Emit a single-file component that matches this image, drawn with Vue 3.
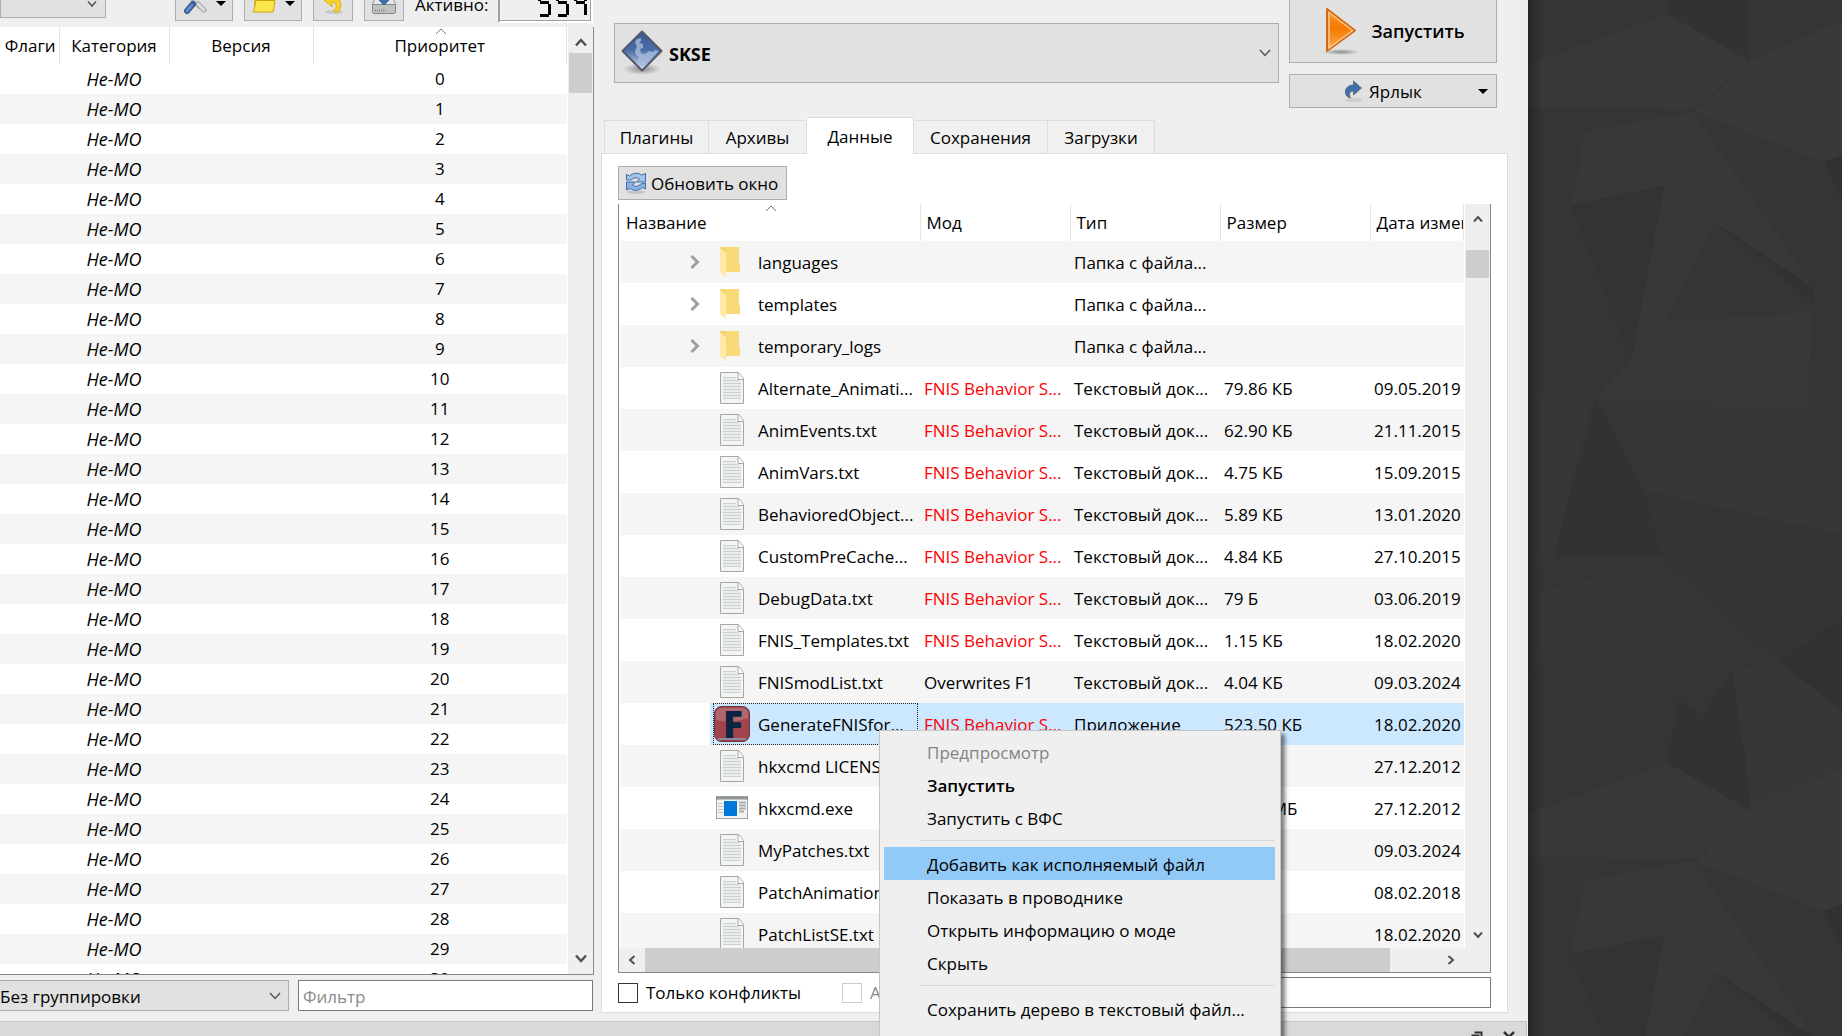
<script setup>
import { ref } from 'vue'

const mods = Array.from({ length: 31 }, (_, i) => i)

const tabs = ['Плагины', 'Архивы', 'Данные', 'Сохранения', 'Загрузки']
const activeTab = ref('Данные')

const fnis = 'FNIS Behavior S...'
const txt = 'Текстовый док...'
const folder = 'Папка с файла...'

const files = [
  { icon: 'folder', name: 'languages', mod: '', type: folder, size: '', date: '' },
  { icon: 'folder', name: 'templates', mod: '', type: folder, size: '', date: '' },
  { icon: 'folder', name: 'temporary_logs', mod: '', type: folder, size: '', date: '' },
  { icon: 'text', name: 'Alternate_Animati...', mod: fnis, type: txt, size: '79.86 КБ', date: '09.05.2019' },
  { icon: 'text', name: 'AnimEvents.txt', mod: fnis, type: txt, size: '62.90 КБ', date: '21.11.2015' },
  { icon: 'text', name: 'AnimVars.txt', mod: fnis, type: txt, size: '4.75 КБ', date: '15.09.2015' },
  { icon: 'text', name: 'BehavioredObject...', mod: fnis, type: txt, size: '5.89 КБ', date: '13.01.2020' },
  { icon: 'text', name: 'CustomPreCache...', mod: fnis, type: txt, size: '4.84 КБ', date: '27.10.2015' },
  { icon: 'text', name: 'DebugData.txt', mod: fnis, type: txt, size: '79 Б', date: '03.06.2019 2' },
  { icon: 'text', name: 'FNIS_Templates.txt', mod: fnis, type: txt, size: '1.15 КБ', date: '18.02.2020 2' },
  { icon: 'text', name: 'FNISmodList.txt', mod: 'Overwrites F1', type: txt, size: '4.04 КБ', date: '09.03.2024 8' },
  { icon: 'fnis', name: 'GenerateFNISfor...', mod: fnis, type: 'Приложение', size: '523.50 КБ', date: '18.02.2020 2', selected: true },
  { icon: 'text', name: 'hkxcmd LICENS...', mod: '', type: '', size: '', date: '27.12.2012 2' },
  { icon: 'exe', name: 'hkxcmd.exe', mod: '', type: '', size: '10.34 МБ', date: '27.12.2012 2' },
  { icon: 'text', name: 'MyPatches.txt', mod: '', type: '', size: '', date: '09.03.2024 2' },
  { icon: 'text', name: 'PatchAnimation...', mod: '', type: '', size: '', date: '08.02.2018' },
  { icon: 'text', name: 'PatchListSE.txt', mod: '', type: '', size: '', date: '18.02.2020 2' },
]

const menuGroups = [
  [
    { label: 'Предпросмотр', disabled: true },
    { label: 'Запустить', bold: true },
    { label: 'Запустить с ВФС' },
  ],
  [
    { label: 'Добавить как исполняемый файл', hover: true },
    { label: 'Показать в проводнике' },
    { label: 'Открыть информацию о моде' },
    { label: 'Скрыть' },
  ],
  [
    { label: 'Сохранить дерево в текстовый файл...' },
    { label: 'Обновить' },
  ],
]

// Lit segments of the active-mods counter
const digits = [
  ['a', 'f', 'g', 'c', 'd'],
  ['a', 'f', 'g', 'c', 'd'],
  ['f', 'b', 'g', 'c'],
]
</script>

<template>
  <div class="screen">
    <div class="window">
      <div class="main">
        <section class="left">
          <div class="toolbar">
            <select class="profile" aria-label="Профиль"><option></option></select>
            <svg class="profile-arrow" width="10" height="8" viewBox="0 0 10 8"><path d="M1 1.500L5 6L9 1.500" fill="none" stroke="#555" stroke-width="1.500" /></svg>
            <div class="tools">
              <button class="tool wide" aria-label="Инструменты">
                <svg width="24" height="24" viewBox="0 0 24 24">
                  <path d="M5 4l12 13" stroke="#b9bcc0" stroke-width="4" />
                  <path d="M15 13l6 6" stroke="#9fa4aa" stroke-width="5" stroke-linecap="round" />
                  <path d="M15 13l6 6" stroke="#dcdfe2" stroke-width="3" stroke-linecap="round" />
                  <path d="M19 3L10 13" stroke="#cdd1d6" stroke-width="3" />
                  <path d="M10 13l-6 7" stroke="#35598f" stroke-width="6" stroke-linecap="round" />
                  <path d="M9 14l-5 6" stroke="#5f8bca" stroke-width="3" stroke-linecap="round" />
                </svg>
                <i class="drop"></i>
              </button>
              <button class="tool wide" aria-label="Открыть папку">
                <svg width="24" height="24" viewBox="0 0 24 24">
                  <path d="M3 20V5l2-2h6l2 3h8v13z" fill="#e4bd17" stroke="#c79e0c" />
                  <path d="M1.500 21L4 9.500h19L21 21z" fill="#fbe64b" stroke="#c9a30e" />
                </svg>
                <i class="drop"></i>
              </button>
              <button class="tool" aria-label="Восстановить">
                <svg width="24" height="24" viewBox="0 0 24 24">
                  <ellipse cx="13" cy="21" rx="9" ry="2" fill="#c9c9c9" />
                  <path d="M3 9l8-8v5c8 0 11 7 7 14-2 2-4 1-6 0 5-2 4-9-1-9v5z" fill="#f5d327" stroke="#dcae16" />
                </svg>
              </button>
              <button class="tool" aria-label="Резервная копия">
                <svg width="26" height="24" viewBox="0 0 26 24">
                  <path d="M5 5h16l4 9H1z" fill="#e4e5e6" stroke="#9b9da0" />
                  <path d="M1.500 13.500h23V21q0 1.500-1.500 1.500H3Q1.500 22.500 1.500 21z" fill="#bfc1c3" stroke="#85878a" />
                  <path d="M4 19.500h11" stroke="#8a8c8e" stroke-width="2" stroke-dasharray="1 1" />
                  <path d="M10 0h6v6h5l-8 8-8-8h5z" fill="#3d70b5" stroke="#2d5689" />
                </svg>
              </button>
              <span class="active-label">Активно:</span>
              <div class="lcd" role="img" aria-label="554">
                <div v-for="(d, i) in digits" :key="i" class="digit">
                  <i v-for="s in d" :key="s" :class="['seg', s]"></i>
                </div>
              </div>
            </div>
          </div>

          <div class="mod-list">
            <div class="mod-view">
              <table class="mods">
                <colgroup><col class="m1" /><col class="m2" /><col class="m3" /><col /></colgroup>
                <thead>
                  <tr>
                    <th>Флаги</th>
                    <th>Категория</th>
                    <th>Версия</th>
                    <th>
                      <svg class="sort" width="12" height="7" viewBox="0 0 12 7"><path d="M1 6L6 1L11 6" fill="none" stroke="#777" /></svg>
                      Приоритет
                    </th>
                  </tr>
                </thead>
                <tbody>
                  <tr v-for="n in mods" :key="n"><td></td><td class="cat">Не-МО</td><td></td><td>{{ n }}</td></tr>
                </tbody>
              </table>
            </div>
            <div class="vbar">
              <svg width="12" height="9" viewBox="0 0 12 9"><path d="M1 7.500L6 2L11 7.500" fill="none" stroke="#505050" stroke-width="2.500" /></svg>
              <div class="thumb mods-thumb"></div>
              <svg class="down" width="12" height="9" viewBox="0 0 12 9"><path d="M1 1.500L6 7L11 1.500" fill="none" stroke="#505050" stroke-width="2.500" /></svg>
            </div>
          </div>

          <div class="filters">
            <div class="grouping">
              <select aria-label="Группировка"><option>Без группировки</option></select>
              <svg width="12" height="8" viewBox="0 0 12 8"><path d="M1 1L6 6.500L11 1" fill="none" stroke="#555" stroke-width="1.500" /></svg>
            </div>
            <input class="filter" type="text" placeholder="Фильтр" aria-label="Фильтр модов" />
          </div>
        </section>

        <section class="right">
          <div class="launch">
            <div class="executable">
              <svg width="44" height="46" viewBox="0 0 44 46">
                <defs>
                  <linearGradient id="skse" x1="0" y1="0" x2="0" y2="1"><stop offset="0" stop-color="#37598f" /><stop offset=".5" stop-color="#4b70a8" /><stop offset="1" stop-color="#dfe7f3" /></linearGradient>
                  <radialGradient id="shade"><stop offset="0" stop-color="#8c8c8c" /><stop offset="1" stop-color="#8c8c8c" stop-opacity="0" /></radialGradient>
                </defs>
                <ellipse cx="22" cy="39" rx="19" ry="6" fill="url(#shade)" />
                <path d="M22 1.500L41.500 21L22 40.500L2.500 21z" fill="url(#skse)" stroke="#52566e" stroke-width="2" stroke-linejoin="round" />
                <path d="M17 9l4-1v3l-2 2 4 1v4l-3 1 1 4 4 1 4-3 4 1 2-2 4 1L22 37l-5-5 2-5-3-2-1-4 2-4-2-5z" fill="#a9bbdb" opacity=".8" />
              </svg>
              <select aria-label="Программа"><option>SKSE</option></select>
              <svg width="12" height="8" viewBox="0 0 12 8"><path d="M1 1L6 6.500L11 1" fill="none" stroke="#555" stroke-width="1.500" /></svg>
            </div>
            <div class="actions">
              <button class="run">
                <svg width="40" height="48" viewBox="0 0 40 48">
                  <defs><linearGradient id="play" x1="0" y1="0" x2="0" y2="1"><stop offset="0" stop-color="#ff9a3a" /><stop offset=".45" stop-color="#f57900" /><stop offset="1" stop-color="#ffab52" /></linearGradient></defs>
                  <ellipse cx="20" cy="45" rx="19" ry="3" fill="url(#shade)" />
                  <path d="M6 2L34 23.500L6 44z" fill="url(#play)" stroke="#d3690f" stroke-width="2" stroke-linejoin="round" />
                  <path d="M8 5.500L31.500 23.500L8 41z" fill="none" stroke="#ffc58b" stroke-width="1.500" />
                </svg>
                <span>Запустить</span>
              </button>
              <button class="shortcut">
                <svg width="20" height="22" viewBox="0 0 20 22">
                  <ellipse cx="10" cy="20" rx="9" ry="2" fill="#cfcfcf" />
                  <path d="M9.500 1l8 7-8 7v-4c-4 0-5 3-3 7-4-1-5.500-4-5-7 .5-4 4-6 8-6z" fill="#3f70ad" stroke="#60707f" stroke-linejoin="round" />
                </svg>
                <span>Ярлык</span>
                <i class="drop"></i>
              </button>
            </div>
          </div>

          <div class="tabs" role="tablist">
            <button v-for="t in tabs" :key="t" role="tab" :aria-selected="t === activeTab" :class="['tab', { active: t === activeTab }]" @click="activeTab = t">{{ t }}</button>
          </div>

          <div class="pane">
            <button class="refresh">
              <svg width="22" height="24" viewBox="0 0 22 24">
                <ellipse cx="11" cy="21" rx="9" ry="2" fill="#c4c8ce" />
                <path d="M1.500 9V3.500l3 1.500c4-3.500 9-3.500 12-1l4-1.500v8.500h-9l3-3c-3-2-6-1.500-8 1z" fill="#a5c4e8" stroke="#3c6cae" />
                <path d="M20.500 12v6l-3-1.500c-4 3.500-9 3.500-12 1l-4 1.500v-8h9l-3 3c3 2 6 1.500 8-1z" fill="#8db1de" stroke="#3c6cae" />
              </svg>
              <span>Обновить окно</span>
            </button>

            <div class="tree">
              <div class="tree-top">
                <div class="tree-view">
                  <table class="files">
                    <colgroup><col class="f1" /><col class="f2" /><col class="f2" /><col class="f2" /><col /></colgroup>
                    <thead>
                      <tr>
                        <th>
                          <svg class="sort" width="12" height="7" viewBox="0 0 12 7"><path d="M1 6L6 1L11 6" fill="none" stroke="#777" /></svg>
                          Название
                        </th>
                        <th>Мод</th>
                        <th>Тип</th>
                        <th>Размер</th>
                        <th>Дата изменения</th>
                      </tr>
                    </thead>
                    <tbody>
                      <tr v-for="f in files" :key="f.name" :class="{ selected: f.selected }">
                        <td class="name-cell">
                          <div class="name">
                            <span class="branch">
                              <svg v-if="f.icon === 'folder'" width="10" height="14" viewBox="0 0 10 14"><path d="M1.500 1L7.500 7L1.500 13" fill="none" stroke="#a0a0a0" stroke-width="3" /></svg>
                            </span>
                            <span class="entry">
                              <svg v-if="f.icon === 'folder'" width="36" height="36" viewBox="0 0 36 36">
                                <path d="M6 3h19v16l1 1v8H6z" fill="#f4d271" />
                                <path d="M12 3h13v16l1 1v8H12z" fill="#f9d978" />
                                <path d="M6 4l6 5v24l-6-5z" fill="#ffe9a6" />
                              </svg>
                              <svg v-else-if="f.icon === 'text'" width="36" height="36" viewBox="0 0 36 36">
                                <path d="M6.500 2.500h18l5 6v25h-23z" fill="#f3f4f4" stroke="#a6a6a6" />
                                <path d="M9 7.500h13M9 10.500h16M9 13.500h18M9 16.500h18M9 19.500h18M9 22.500h18M9 25.500h18M9 28.500h18" stroke="#cdd0d0" />
                                <path d="M9 9h13M9 12h18M9 15h18M9 18h18M9 21h18M9 24h18M9 27h18" stroke="#e3e5e5" />
                                <path d="M24 2.500v7h5.500" fill="#fff" stroke="#a6a6a6" />
                              </svg>
                              <svg v-else-if="f.icon === 'fnis'" width="36" height="36" viewBox="0 0 36 36">
                                <rect x=".5" y=".5" width="35" height="35" rx="7" fill="#a2444b" stroke="#6c3540" />
                                <path d="M2 14V8q0-6 6-6h20q6 0 6 6v4q-16 6-32 2z" fill="#b98088" opacity=".6" />
                                <path d="M4 33h28" stroke="#8d8796" stroke-width="2" />
                                <text x="9" y="32" font-size="37" font-weight="800" fill="#0c2442" font-family="Open Sans">F</text>
                              </svg>
                              <svg v-else width="36" height="36" viewBox="0 0 36 36">
                                <rect x="2.500" y="6.500" width="31" height="22" fill="#f2f3f3" stroke="#a3a7a9" />
                                <path d="M2 8h32" stroke="#8e9497" stroke-width="3" />
                                <path d="M4 13.500h5M4 16.500h5M4 19.500h5M4 22.500h5" stroke="#c0c4c6" />
                                <path d="M25 12.500h7M25 15.500h7M25 18.500h7M25 21.500h5" stroke="#a9adb0" stroke-width="2" />
                                <rect x="10" y="11" width="13" height="15" fill="#0078d7" />
                              </svg>
                              <span>{{ f.name }}</span>
                            </span>
                          </div>
                        </td>
                        <td :class="{ conflict: f.mod === fnis }">{{ f.mod }}</td>
                        <td>{{ f.type }}</td>
                        <td>{{ f.size }}</td>
                        <td>{{ f.date }}</td>
                      </tr>
                    </tbody>
                  </table>
                </div>
                <div class="vbar tree-bar">
                  <svg width="10" height="8" viewBox="0 0 10 8"><path d="M1 6.500L5 2L9 6.500" fill="none" stroke="#505050" stroke-width="2" /></svg>
                  <div class="thumb files-thumb"></div>
                  <svg class="down" width="10" height="8" viewBox="0 0 10 8"><path d="M1 1.500L5 6L9 1.500" fill="none" stroke="#505050" stroke-width="2" /></svg>
                </div>
              </div>
              <div class="hbar">
                <svg width="8" height="10" viewBox="0 0 8 10"><path d="M6.500 1L2 5L6.500 9" fill="none" stroke="#505050" stroke-width="2" /></svg>
                <div class="hthumb"></div>
                <svg width="8" height="10" viewBox="0 0 8 10"><path d="M1.500 1L6 5L1.500 9" fill="none" stroke="#505050" stroke-width="2" /></svg>
              </div>
            </div>

            <div class="options">
              <label class="check conflicts"><input type="checkbox" />Только конфликты</label>
              <label class="check off"><input type="checkbox" disabled />Архивы</label>
              <input class="tree-filter" type="text" aria-label="Фильтр файлов" />
            </div>
          </div>
        </section>
      </div>

      <footer class="dock">
        <svg width="12" height="12" viewBox="0 0 12 12"><path d="M3.500 1.500h7v6h-2M1.500 4.500h6v6h-6z" fill="none" stroke="#333" stroke-width="2" /></svg>
        <svg width="12" height="12" viewBox="0 0 12 12"><path d="M1 1L11 11M11 1L1 11" stroke="#333" stroke-width="2.500" /></svg>
      </footer>

      <div class="menu" role="menu">
        <div v-for="(g, i) in menuGroups" :key="i" class="group">
          <button v-for="m in g" :key="m.label" role="menuitem" :disabled="m.disabled" :class="{ bold: m.bold, hover: m.hover }">{{ m.label }}</button>
        </div>
      </div>
    </div>

    <div class="desktop">
      <svg viewBox="0 0 314 1036" preserveAspectRatio="xMinYMin slice">
        <defs>
          <g id="facets">
            <path d="M0 64L140 14L222 61L165 110L0 108z" fill="#383838" />
            <path d="M140 14L222 61L217 0L150 -50z" fill="#323232" />
            <path d="M222 61L314 20V158L297 162L167 112z" fill="#393939" />
            <path d="M57 131L165 112L286 288L188 223L138 322L103 360L136 186L43 205z" fill="#383838" />
            <path d="M188 223L286 288V304z" fill="#323232" />
            <path d="M43 205L136 186L103 360z" fill="#333" />
            <path d="M297 162L314 155V200z" fill="#313131" />
          </g>
        </defs>
        <rect width="314" height="1036" fill="#353535" />
        <use href="#facets" />
        <path d="M68 398L103 360L138 322L284 312L280 405z" fill="#383838" />
        <path d="M68 398L280 405H314V535L115 490z" fill="#373737" />
        <path d="M68 398L115 490L135 557L26 557L36 520z" fill="#323232" />
        <path d="M0 398H65L26 553L0 570z" fill="#373737" />
        <path d="M115 490L314 535V618L252 662L135 557z" fill="#343434" />
        <path d="M0 595L80 575L12 655L0 690z" fill="#373737" />
        <path d="M205 671L222 811L140 763z" fill="#323232" />
        <path d="M205 671L252 662L314 711V769L222 811z" fill="#373737" />
        <path d="M252 662L314 618V711z" fill="#313131" />
        <use href="#facets" y="749" />
      </svg>
    </div>
  </div>
</template>

<style>
body {
  margin: 0;
  overflow: hidden;
}
</style>

<style scoped>
* {
  box-sizing: border-box;
}
.screen {
  display: flex;
  height: 100vh;
  overflow: hidden;
  background: #353535;
  color: #000;
  font: 17px/24px "Open Sans", "Noto Sans", sans-serif;
}
button,
select,
input {
  margin: 0;
  padding: 0;
  border: 0;
  border-radius: 0;
  font: inherit;
  color: inherit;
  background: transparent;
}
select {
  appearance: none;
}
svg {
  flex: none;
  display: block;
}
.window {
  position: relative;
  flex: 1;
  min-width: 0;
  display: flex;
  flex-direction: column;
  background: #efefef;
}
.main {
  flex: 1;
  min-height: 0;
  display: grid;
  grid-template: minmax(0, 1fr) / minmax(0, 594fr) minmax(0, 934fr);
}
.left {
  min-width: 0;
  display: flex;
  flex-direction: column;
}
.right {
  min-width: 0;
  display: flex;
  flex-direction: column;
  padding: 0 20px 8px 7px;
}

/* Toolbar */
.toolbar {
  display: flex;
  align-items: flex-end;
  height: 27px;
  padding-right: 1px;
  overflow: hidden;
}
.profile {
  width: 106px;
  height: 34px;
  margin-bottom: 9px;
  border: 1px solid #adadad;
  background: #e1e1e1;
}
.profile-arrow {
  margin: 0 0 19px -19px;
}
.tools {
  flex: 1;
  display: flex;
  align-items: flex-end;
  justify-content: flex-end;
  gap: 11px;
}
.tool {
  display: flex;
  align-items: center;
  justify-content: center;
  gap: 9px;
  width: 40px;
  height: 36px;
  margin-bottom: 6px;
  border: 1px solid #adadad;
  background: #e1e1e1;
}
.wide {
  width: 58px;
}
.drop {
  border: 5px solid transparent;
  border-top-color: #000;
  border-bottom: 0;
}
.active-label {
  width: 72px;
  margin-bottom: 10px;
}
.lcd {
  display: flex;
  justify-content: flex-end;
  align-items: flex-end;
  gap: 5px;
  width: 95px;
  height: 40px;
  margin-bottom: 4px;
  padding: 0 4px 4px;
  border: 2px solid #a0a0a0;
  border-right-color: #fff;
  border-bottom-color: #fff;
  box-shadow: inset -1px -1px 0 #a0a0a0;
}
.digit {
  position: relative;
  width: 13px;
  height: 28px;
}
.seg {
  position: absolute;
  background: #000;
}
.a, .g, .d {
  left: 2px;
  right: 2px;
  height: 3px;
}
.a { top: 0; }
.g { top: 12px; }
.d { bottom: 0; }
.b, .c, .f {
  width: 3px;
  height: 11px;
}
.b { right: 0; top: 1px; }
.c { right: 0; bottom: 2px; }
.f { left: 0; top: 1px; }

/* Mod list */
.mod-list {
  flex: 1;
  min-height: 0;
  display: flex;
  border: solid #828790;
  border-width: 0 1px 1px 0;
  background: #fff;
}
.mod-view,
.tree-view {
  flex: 1;
  min-width: 0;
  overflow: hidden;
}
table {
  width: 100%;
  border-collapse: collapse;
  table-layout: fixed;
}
th,
td {
  padding: 0;
  overflow: hidden;
  white-space: nowrap;
  font-weight: 400;
}
th {
  position: relative;
  border-right: 1px solid #e5e5e5;
}
.m1 { width: 59px; }
.m2 { width: 110px; }
.m3 { width: 144px; }
.mods th,
.mods td {
  text-align: center;
}
.mods th {
  height: 37px;
}
.mods th:first-child {
  padding-left: 2px;
}
.mods td {
  height: 30px;
}
.mods tr:nth-child(even) td,
.files tr:nth-child(odd) td {
  background: #f5f5f5;
}
.cat {
  font-size: 18px;
  font-style: italic;
}
.sort {
  position: absolute;
  top: 1px;
  left: calc(50% - 5px);
}
.vbar {
  display: flex;
  flex-direction: column;
  align-items: center;
  width: 26px;
  padding: 11px 1px;
  border-left: 1px solid #fff;
  background: #efefef;
}
.thumb {
  width: 100%;
  background: #cdcdcd;
}
.mods-thumb {
  height: 40px;
  margin-top: 6px;
}
.down {
  margin-top: auto;
}

.filters {
  display: grid;
  grid-template-columns: minmax(0, 289fr) minmax(0, 295fr);
  gap: 9px;
  padding: 5px 1px 10px 0;
}
.grouping {
  display: flex;
  align-items: center;
  height: 31px;
  padding-right: 7px;
  border: solid #adadad;
  border-width: 1px 1px 1px 0;
  background: #e1e1e1;
}
.grouping select {
  flex: 1;
  min-width: 0;
  padding-top: 2px;
}
.filter,
.tree-filter {
  min-width: 0;
  height: 31px;
  padding: 2px 4px 0;
  border: 1px solid #7a7a7a;
  background: #fff;
}
.filter::placeholder {
  color: #8a8a8a;
}

/* Launcher */
.launch {
  display: flex;
  align-items: flex-start;
  gap: 10px;
  padding: 0 11px 0 13px;
}
.executable {
  flex: 1;
  display: flex;
  align-items: center;
  min-width: 0;
  height: 60px;
  margin-top: 23px;
  padding: 0 7px 0 5px;
  border: 1px solid #adadad;
  background: #e1e1e1;
  font-size: 18px;
  font-weight: 700;
}
.executable select {
  flex: 1;
  padding: 2px 0 0 5px;
}
.actions {
  width: 208px;
  display: flex;
  flex-direction: column;
  gap: 11px;
}
.run {
  display: flex;
  align-items: center;
  justify-content: center;
  gap: 10px;
  height: 63px;
  border: solid #adadad;
  border-width: 0 1px 1px;
  background: #e1e1e1;
  font-size: 18px;
  font-weight: 600;
}
.shortcut {
  display: flex;
  align-items: center;
  gap: 5px;
  height: 34px;
  padding: 0 8px 0 54px;
  border: 1px solid #adadad;
  background: #e1e1e1;
}
.shortcut span,
.refresh span {
  padding-top: 2px;
}
.shortcut .drop {
  margin-left: auto;
}

/* Tabs */
.tabs {
  display: flex;
  align-items: flex-end;
  height: 46px;
  margin: 0 0 -1px 3px;
}
.tab {
  height: 34px;
  width: 102px;
  padding-top: 2px;
  border: 1px solid #dcdcdc;
  border-left-width: 0;
  background: #f0f0f0;
}
.tab:nth-child(1) {
  width: 105px;
  border-left-width: 1px;
}
.tab:nth-child(2) {
  width: 98px;
}
.tab:nth-child(4) {
  width: 134px;
}
.tab:nth-child(5) {
  width: 107px;
}
.tab.active {
  position: relative;
  width: 107px;
  height: 37px;
  border-bottom: 0;
  background: #fff;
}
.pane {
  flex: 1;
  min-height: 0;
  display: flex;
  flex-direction: column;
  padding: 12px 16px 4px 16px;
  border: 1px solid #dcdcdc;
  background: #fff;
}
.refresh {
  align-self: flex-start;
  display: flex;
  align-items: center;
  gap: 4px;
  height: 34px;
  padding: 0 8px 0 6px;
  border: 1px solid #adadad;
  background: #e1e1e1;
}

/* File tree */
.tree {
  flex: 1;
  min-height: 0;
  display: flex;
  flex-direction: column;
  margin-top: 4px;
  border: solid #828790;
  border-width: 0 1px 1px;
}
.tree-top {
  flex: 1;
  min-height: 0;
  display: flex;
}
.tree-view {
  padding-left: 1px;
}
.f1 { width: 300px; }
.f2 { width: 150px; }
.files th {
  height: 37px;
  padding: 0 0 0 6px;
  text-align: left;
}
.files td {
  height: 42px;
  padding: 1px 0 0 4px;
}
.files td.name-cell {
  padding: 0;
}
.name {
  display: flex;
  height: 42px;
}
.branch {
  display: flex;
  align-items: center;
  justify-content: flex-end;
  width: 90px;
  padding-right: 10px;
}
.entry {
  flex: 1;
  display: flex;
  align-items: center;
  gap: 8px;
  margin: 0 2px 0 3px;
  border: 1px solid transparent;
}
.entry span {
  padding-top: 1px;
}
.files tr.selected td {
  background: #cce8ff;
}
.files tr.selected td.name-cell {
  background: linear-gradient(90deg, #fff 90px, #cce8ff 90px);
}
.selected .entry {
  border: 1px dotted #222;
}
.conflict {
  color: #f00;
}
.tree-bar {
  padding: 11px 1px 9px;
}
.files-thumb {
  height: 28px;
  margin-top: 27px;
}
.hbar {
  display: flex;
  align-items: center;
  height: 24px;
  padding: 0 35px 0 9px;
  background: #efefef;
}
.hthumb {
  flex: 1;
  height: 100%;
  margin: 0 57px 0 9px;
  background: #cdcdcd;
}
.options {
  display: flex;
  align-items: center;
  padding-top: 4px;
}
.check {
  display: flex;
  align-items: center;
  gap: 8px;
}
.check input {
  appearance: none;
  width: 20px;
  height: 20px;
  border: 1px solid #333;
  background: #fff;
}
.conflicts {
  width: 224px;
}
.off {
  width: 112px;
  color: #8a8a8a;
}
.off input {
  border-color: #ccc;
}
.tree-filter {
  flex: 1;
}

/* Log dock */
.dock {
  display: flex;
  justify-content: flex-end;
  gap: 20px;
  height: 15px;
  margin-right: 1px;
  padding: 9px 11px 0 0;
  overflow: hidden;
  border: solid #c4c4c4;
  border-width: 1px 1px 0 0;
  background: #d9d9d9;
}

/* Context menu */
.menu {
  position: absolute;
  left: 879px;
  top: 730px;
  width: 402px;
  padding: 4px 5px 0 4px;
  border: 1px solid #c6c6c6;
  background: #efefef;
  box-shadow: 4px 4px 4px rgba(0, 0, 0, 0.5);
}
.group + .group {
  margin-top: 6px;
  padding-top: 6px;
  border-top: 1px solid #d8d8d8;
  border-image: linear-gradient(90deg, transparent 37px, #d8d8d8 37px) 1;
}
.menu button {
  display: block;
  width: 100%;
  height: 33px;
  padding: 2px 0 0 43px;
  text-align: left;
}
.menu button:disabled {
  color: #838383;
}
.menu .bold {
  font-weight: 600;
}
.menu .hover {
  background: #91c9f7;
}

/* Wallpaper */
.desktop {
  position: relative;
  flex: 0 0 314px;
  overflow: hidden;
}
.desktop svg {
  width: 100%;
  height: 100%;
}
.desktop::before {
  content: "";
  position: absolute;
  inset: 0 auto 0 0;
  width: 14px;
  background: linear-gradient(90deg, rgba(0, 0, 0, 0.3), transparent);
}
</style>
